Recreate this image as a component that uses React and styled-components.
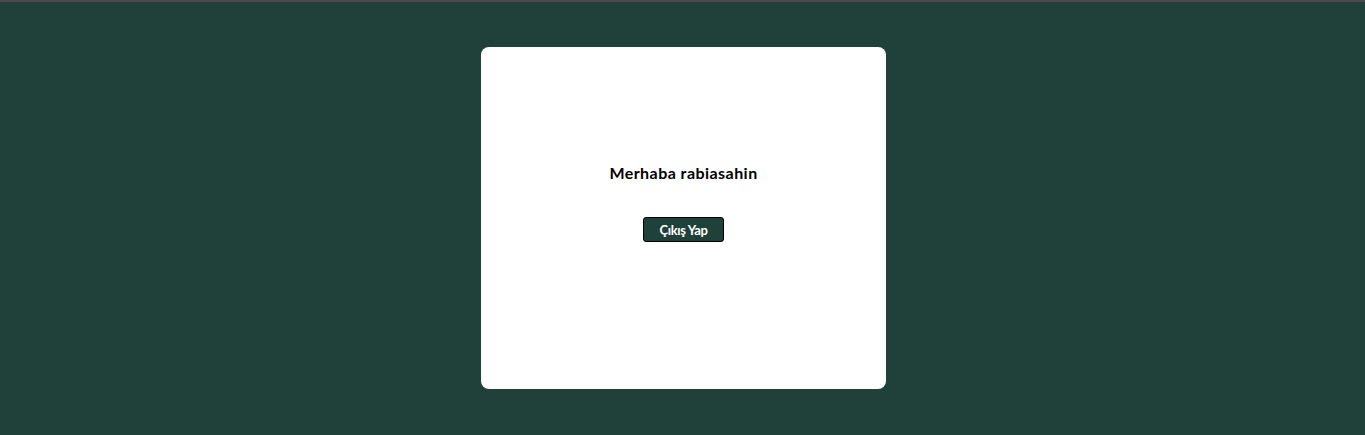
import React from 'react'
import styled, { createGlobalStyle } from 'styled-components'

const GlobalStyle = createGlobalStyle`
  html, body {
    margin: 0;
    padding: 0;
    background: #20403a;
  }
  body {
    font-family: Lato, "Open Sans", sans-serif;
  }
`

const Page = styled.div`
  height: 435px;
  box-sizing: border-box;
  border-top: 2px solid #4b4b4d;
  display: flex;
  align-items: flex-start;
  justify-content: center;
  padding: 45px 0 0 2px;
  background: #20403a;
`

const Card = styled.div`
  width: 405px;
  height: 342px;
  box-sizing: border-box;
  background: #fff;
  border-radius: 8px;
  display: flex;
  flex-direction: column;
  align-items: center;
  padding-top: 116px;
`

const Title = styled.h1`
  margin: 0;
  font-size: 16px;
  line-height: 20px;
  font-weight: 700;
  color: #000;
  letter-spacing: 0.45px;
`

const LogoutBtn = styled.button`
  margin-top: 34px;
  width: 81px;
  height: 25px;
  box-sizing: border-box;
  background: #20403a;
  color: #fff;
  border: 1px solid #000;
  border-radius: 3px;
  font-family: Lato, sans-serif;
  font-size: 13px;
  font-weight: 700;
  letter-spacing: -0.4px;
  padding: 0;
  cursor: pointer;
`

const App = () => {
  return (
    <>
      <GlobalStyle />
      <Page>
        <Card>
          <Title>Merhaba rabiasahin</Title>
          <LogoutBtn>Çıkış Yap</LogoutBtn>
        </Card>
      </Page>
    </>
  )
}

export default App
